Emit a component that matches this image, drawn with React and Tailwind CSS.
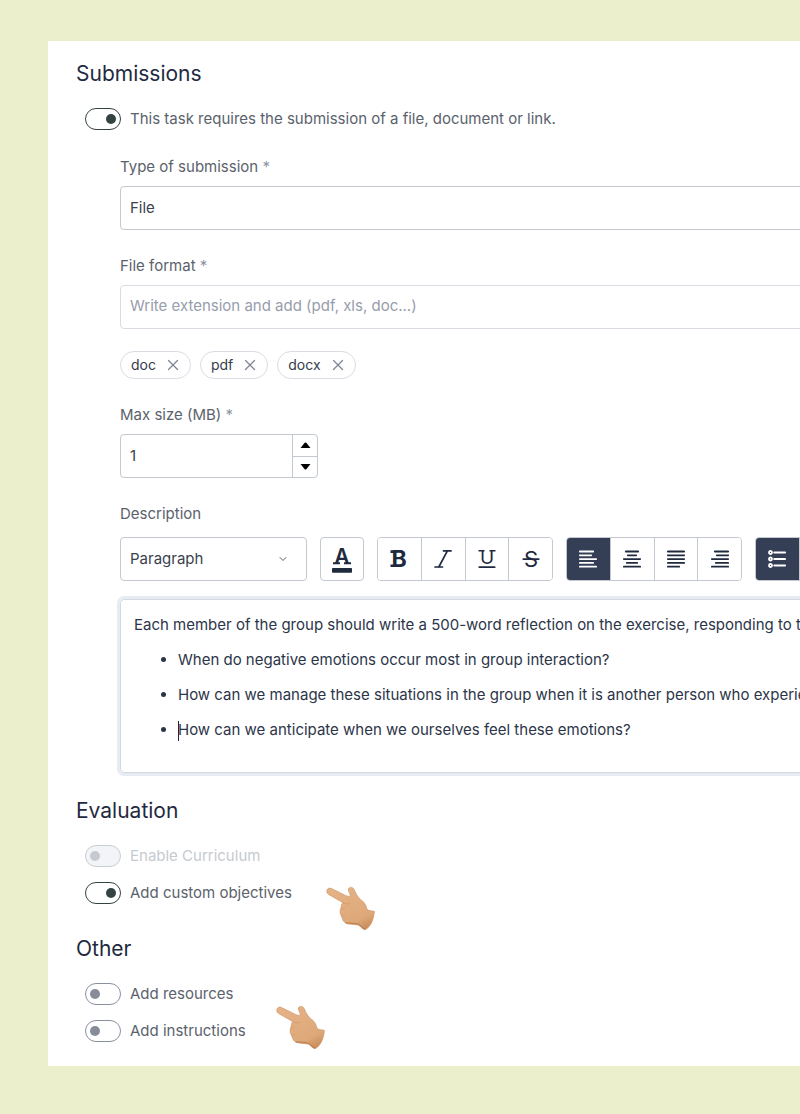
import { useState } from 'react';
import clsx from 'clsx';
import { ChevronDown, X } from 'lucide-react';

// Line icons share an 18x18 box, each row is [x1, x2]
const alignments = [
  { name: 'Align left', rows: [[0, 15], [0, 13], [0, 18], [0, 15], [0, 18]] },
  { name: 'Align center', rows: [[2, 16], [4, 14], [0, 18], [3, 15], [0, 18]] },
  { name: 'Justify', rows: [[0, 18], [0, 18], [0, 18], [0, 18], [0, 13]] },
  { name: 'Align right', rows: [[3, 18], [5, 18], [0, 18], [4, 18], [0, 18]] },
];

function AlignIcon({ rows }) {
  return (
    <svg width="18" height="18" viewBox="0 0 18 18" stroke="currentColor" strokeWidth="1.8" strokeLinecap="round">
      {rows.map(([x1, x2], i) => (
        <line key={i} x1={x1 + 0.8} x2={x2 - 0.8} y1={1.5 + i * 3.8} y2={1.5 + i * 3.8} />
      ))}
    </svg>
  );
}

function ListIcon() {
  return (
    <svg width="18" height="18" viewBox="0 0 18 18" fill="none" stroke="currentColor" strokeWidth="1.8" strokeLinecap="round">
      {[2.5, 9, 15.5].map((y) => (
        <g key={y}>
          <circle cx="2.5" cy={y} r="1.5" />
          <line x1="6.2" x2="17.2" y1={y} y2={y} />
        </g>
      ))}
    </svg>
  );
}

// Letter icons: a sans letter with slab feet added as bars
function ColorIcon() {
  return (
    <svg width="32" height="40" viewBox="0 0 32 40" fill="currentColor">
      <text x="16" y="25" textAnchor="middle" className="text-[21px] font-semibold">A</text>
      <path d="M7 23.300h7v2H7zM18 23.300h7v2h-7z" />
      <rect x="6" y="29" width="20" height="4.800" rx="0.8" />
    </svg>
  );
}

function BoldIcon() {
  return (
    <svg width="32" height="36" viewBox="0 0 32 36" fill="currentColor">
      <text x="16" y="26" textAnchor="middle" className="text-[23px] font-bold">B</text>
      <path d="M7.500 9.300h5v2.600h-5zM7.500 23.400h5V26h-5z" />
    </svg>
  );
}

function ItalicIcon() {
  return (
    <svg width="24" height="24" viewBox="0 0 24 24" fill="none" stroke="currentColor" strokeWidth="1.7" strokeLinecap="round">
      <path d="M12.500 3.900H20M4 20h7.500M16.400 3.900 7.800 20" />
    </svg>
  );
}

function UnderlineIcon() {
  return (
    <svg width="32" height="36" viewBox="0 0 32 36" fill="currentColor">
      <text x="16" y="23" textAnchor="middle" className="text-[19px]">U</text>
      <path d="M7.500 9h6v1.600h-6zM18.500 9h6v1.600h-6z" />
      <rect x="7.400" y="25.300" width="17.200" height="1.700" rx="0.8" />
    </svg>
  );
}

function StrikeIcon() {
  return (
    <svg width="32" height="36" viewBox="0 0 32 36" fill="currentColor">
      <text x="16" y="26" textAnchor="middle" className="text-[22px]">S</text>
      <rect x="7.400" y="17.300" width="17.200" height="1.700" rx="0.8" />
    </svg>
  );
}

function PointingHand({ className }) {
  return (
    <svg width="50" height="45" viewBox="48 50 150 135" fill="none" className={className} aria-hidden="true">
      <defs>
        <linearGradient id="skin" x1="80" y1="60" x2="150" y2="190" gradientUnits="userSpaceOnUse">
          <stop offset="0" stopColor="#e5b286" />
          <stop offset="0.75" stopColor="#dea979" />
          <stop offset="1" stopColor="#c98a59" />
        </linearGradient>
      </defs>
      <path
        d="M63 57C51 53 46 69 55 75L99 100C92 103 96 112 92 118C88 127 91 137 96 143C97 156 106 162 116 164L145 167C152 171 157 180 164 181C180 177 192 150 193 126C185 124 177 125 171 120C168 106 163 98 152 91C143 83 137 72 132 60C127 51 114 53 115 62C116 69 121 73 121 81C114 82 108 79 102 76Z"
        fill="url(#skin)"
        stroke="#cc9364"
        strokeWidth="2"
      />
      <path d="M99 100C105 104 113 105 120 102" stroke="#cf9565" strokeWidth="2" strokeLinecap="round" />
      <path d="M94 119C97 116 100 116 103 118M96 143C97 139 100 137 104 138" stroke="#cf9565" strokeWidth="2" strokeLinecap="round" />
      <path d="M108 161C126 161 139 162 147 166C153 169 158 176 165 179" stroke="#bb7a4b" strokeWidth="3" strokeLinecap="round" />
    </svg>
  );
}

function Toggle({ label, defaultChecked, disabled }) {
  return (
    <label className={clsx('flex items-center gap-[9px] h-[22px]', disabled ? 'text-[#c6cad0]' : 'text-[#5b626c]')}>
      <input
        type="checkbox"
        role="switch"
        defaultChecked={defaultChecked}
        disabled={disabled}
        className="flex h-[22px] w-9 shrink-0 appearance-none items-center rounded-full border border-[#8b90a0] bg-white px-1 before:size-[10px] before:rounded-full before:bg-[#878c99] checked:justify-end checked:border-[#324342] checked:before:bg-[#324342] disabled:border-[#c9cdd6] disabled:bg-[#f2f4f8] disabled:before:bg-[#c5c9d1]"
      />
      {label}
    </label>
  );
}

function FieldLabel({ htmlFor, children, required }) {
  return (
    <label htmlFor={htmlFor} className="block h-6 text-[#5b626c]">
      {children}
      {required && <span className="text-[#8e95a3]"> *</span>}
    </label>
  );
}

function ToolButton({ label, active, onClick, children }) {
  return (
    <button
      type="button"
      aria-label={label}
      onClick={onClick}
      className={clsx(
        'flex min-w-0 flex-1 items-center justify-center border-r border-[#c3c8d1] last:border-r-0',
        active ? 'bg-[#343f56] text-white' : 'bg-white text-[#1f2a3f]'
      )}
    >
      {children}
    </button>
  );
}

function ToolGroup({ className, children }) {
  return <div className={clsx('flex h-11 shrink-0 overflow-hidden rounded border border-[#c3c8d1]', className)}>{children}</div>;
}

export default function App() {
  const [formats, setFormats] = useState(['doc', 'pdf', 'docx']);
  const [maxSize, setMaxSize] = useState(1);
  const [align, setAlign] = useState('Align left');

  return (
    <div className="overflow-hidden bg-[#ebefcb] pt-[41px] pb-12 pl-12 font-['Inter',sans-serif] text-[15px] leading-6">
      <main className="bg-white pt-[17px] pb-6 pl-7">
        {/* Submissions */}
        <section>
          <h2 className="text-[21px] leading-8 text-[#1f2a41]">Submissions</h2>
          <div className="mt-[18px] pl-[9px]">
            <Toggle label="This task requires the submission of a file, document or link." defaultChecked />
          </div>

          {/* Fields run past the right edge of the panel */}
          <div className="-mr-4 pt-[25px] pl-11">
            <FieldLabel htmlFor="type" required>Type of submission</FieldLabel>
            <select id="type" className="mt-[7px] block h-11 w-full appearance-none rounded border border-[#c3c8d1] bg-white px-[9px] text-[#3a424e]">
              <option>File</option>
              <option>Document</option>
              <option>Link</option>
            </select>

            <div className="mt-6">
              <FieldLabel htmlFor="format" required>File format</FieldLabel>
              <input
                id="format"
                type="text"
                placeholder="Write extension and add (pdf, xls, doc...)"
                className="mt-[7px] block h-11 w-full rounded border border-[#d9dce3] px-[9px] pb-1 placeholder:text-[#979dab]"
              />
            </div>

            <ul className="mt-[22px] flex gap-[9px]">
              {formats.map((format) => (
                <li key={format} className="flex h-7 items-center gap-2 rounded-full border border-[#d9dce3] pr-2 pl-[10px] text-sm text-[#343d4b]">
                  {format}
                  <button type="button" aria-label={`Remove ${format}`} onClick={() => setFormats(formats.filter((f) => f !== format))}>
                    <X size={18} strokeWidth={1.6} className="text-[#7d8494]" />
                  </button>
                </li>
              ))}
            </ul>

            <div className="mt-6">
              <FieldLabel htmlFor="size" required>Max size (MB)</FieldLabel>
              <div className="mt-[7px] flex h-11 w-[198px] overflow-hidden rounded border border-[#c3c8d1]">
                <input
                  id="size"
                  type="text"
                  inputMode="numeric"
                  value={maxSize}
                  onChange={(e) => setMaxSize(Number(e.target.value) || 0)}
                  className="min-w-0 flex-1 px-[9px] text-[#3a424e]"
                />
                <div className="flex w-[25px] flex-col divide-y divide-[#c3c8d1] border-l border-[#c3c8d1] text-black">
                  <button type="button" aria-label="Increase" onClick={() => setMaxSize(maxSize + 1)} className="flex flex-1 items-center justify-center">
                    <svg width="11" height="6" viewBox="0 0 10 6" fill="currentColor"><path d="M0 6 4.200.8Q5 0 5.800.8L10 6Z" /></svg>
                  </button>
                  <button type="button" aria-label="Decrease" onClick={() => setMaxSize(Math.max(0, maxSize - 1))} className="flex flex-1 items-center justify-center">
                    <svg width="11" height="6" viewBox="0 0 10 6" fill="currentColor"><path d="M0 0 4.200 5.200Q5 6 5.800 5.200L10 0Z" /></svg>
                  </button>
                </div>
              </div>
            </div>

            {/* Description editor */}
            <div className="mt-6">
              <FieldLabel htmlFor="block">Description</FieldLabel>
              <div className="mt-[11px] flex gap-[13px]">
                <div className="relative w-[187px] shrink-0">
                  <select id="block" className="h-11 w-full appearance-none rounded border border-[#c3c8d1] bg-white px-[9px] text-[#3a424e]">
                    <option>Paragraph</option>
                    <option>Heading 1</option>
                    <option>Heading 2</option>
                  </select>
                  <ChevronDown size={12} strokeWidth={2} className="pointer-events-none absolute top-4 right-[18px] text-[#5b6474]" />
                </div>
                <button type="button" aria-label="Text color" className="flex size-11 shrink-0 items-center justify-center rounded border border-[#c3c8d1] text-[#1f2a3f]">
                  <ColorIcon />
                </button>
                <ToolGroup className="w-44">
                  <ToolButton label="Bold"><BoldIcon /></ToolButton>
                  <ToolButton label="Italic"><ItalicIcon /></ToolButton>
                  <ToolButton label="Underline"><UnderlineIcon /></ToolButton>
                  <ToolButton label="Strikethrough"><StrikeIcon /></ToolButton>
                </ToolGroup>
                <ToolGroup className="w-44">
                  {alignments.map(({ name, rows }) => (
                    <ToolButton key={name} label={name} active={align === name} onClick={() => setAlign(name)}>
                      <AlignIcon rows={rows} />
                    </ToolButton>
                  ))}
                </ToolGroup>
                <ToolGroup className="w-22">
                  <ToolButton label="Bulleted list" active><ListIcon /></ToolButton>
                  <ToolButton label="More" />
                </ToolGroup>
              </div>

              <div
                role="textbox"
                aria-label="Description"
                aria-multiline="true"
                className="mt-[18px] overflow-hidden rounded border border-[#d3d8e1] pt-[13px] pb-[30px] pl-[13px] whitespace-nowrap text-[#2c3548] ring-3 ring-[#e7ebf3]"
              >
                <p>Each member of the group should write a 500-word reflection on the exercise, responding to the following questions:</p>
                <ul className="mt-[11px] flex list-disc flex-col gap-[11px] pl-11">
                  <li>When do negative emotions occur most in group interaction?</li>
                  <li>How can we manage these situations in the group when it is another person who experiences them?</li>
                  <li><span className="-mr-px inline-block h-5 w-px bg-[#1f2a41] align-middle" />How can we anticipate when we ourselves feel these emotions?</li>
                </ul>
              </div>
            </div>
          </div>
        </section>

        {/* Evaluation */}
        <section className="mt-[22px]">
          <h2 className="text-[21px] leading-8 text-[#1f2a41]">Evaluation</h2>
          <div className="mt-[18px] flex flex-col gap-[15px] pl-[9px]">
            <Toggle label="Enable Curriculum" disabled />
            <div className="relative">
              <Toggle label="Add custom objectives" defaultChecked />
              <PointingHand className="absolute top-1 left-[241px]" />
            </div>
          </div>
        </section>

        {/* Other */}
        <section className="mt-[29px]">
          <h2 className="text-[21px] leading-8 text-[#1f2a41]">Other</h2>
          <div className="relative mt-[18px] flex flex-col gap-[15px] pl-[9px]">
            <Toggle label="Add resources" />
            <Toggle label="Add instructions" />
            <PointingHand className="absolute top-[22px] left-50" />
          </div>
        </section>
      </main>
    </div>
  );
}
